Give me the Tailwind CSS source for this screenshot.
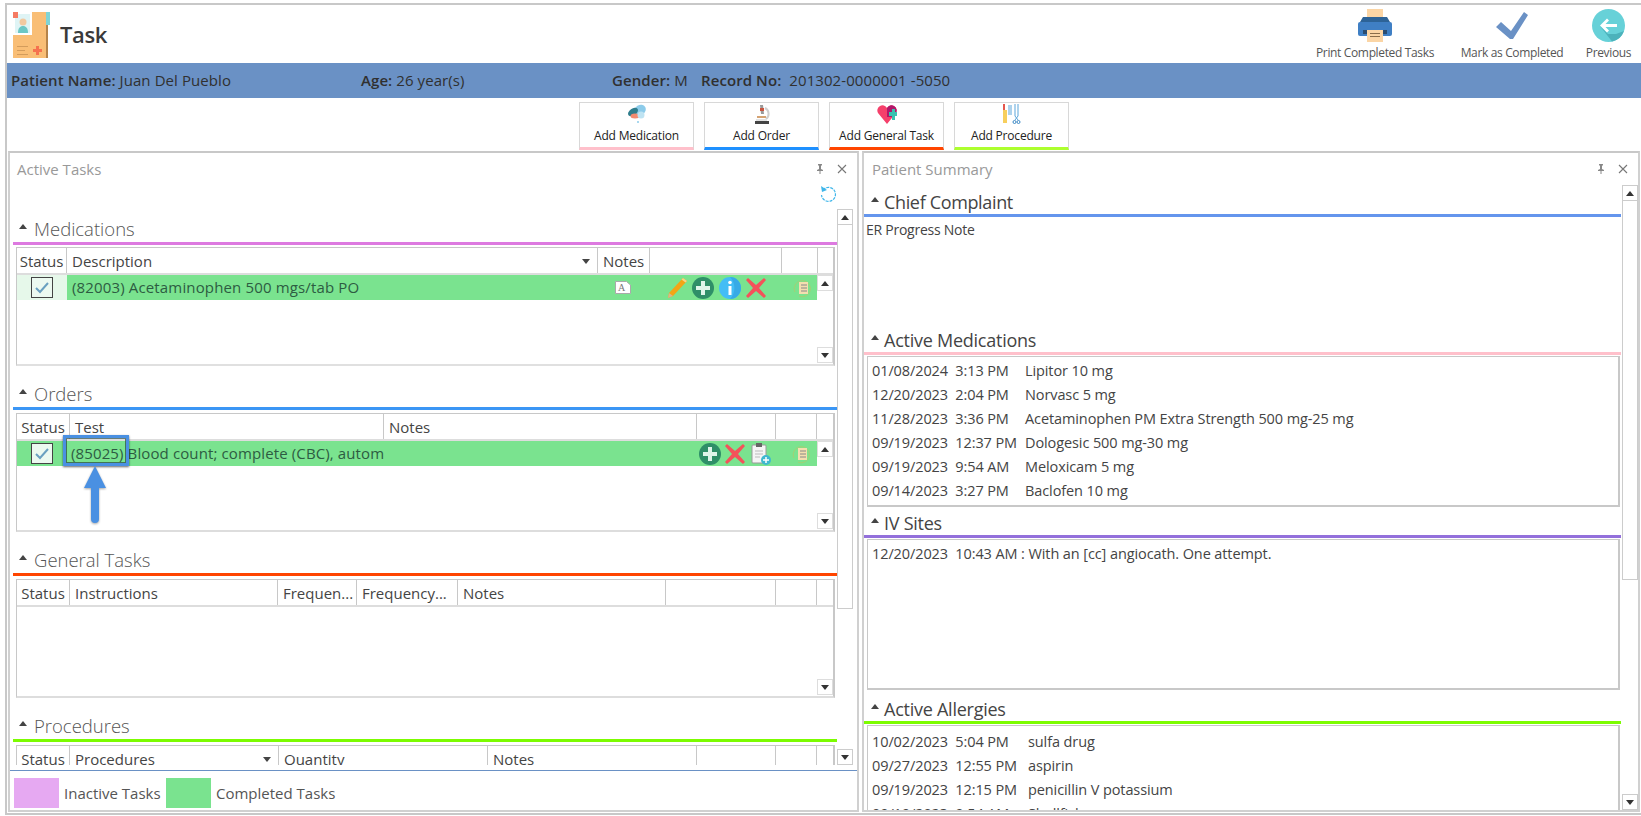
<!DOCTYPE html>
<html lang="en">
<head>
    <meta charset="UTF-8">
    <title>Task</title>
    <script src="https://cdn.jsdelivr.net/npm/@tailwindcss/browser@4"></script>
</head>
<body class="bg-white h-[816px] w-[1641px] overflow-hidden font-['Open_Sans',sans-serif] text-[15px] text-[#444]">
<div class="pt-[3px] pl-[5px] h-[815px] flex flex-col">
<div class="border-t-2 border-l-2 border-b-2 border-[#c8c8c8] flex-1 flex flex-col min-h-0">

    <!-- Header -->
    <header class="h-[58px] flex justify-between">
        <div class="flex items-center pl-[6px]">
            <svg width="37" height="46" viewBox="0 0 37 46" class="mt-[1px]">
                <rect x="0" y="0" width="35" height="46" fill="#f9be76"/>
                <rect x="33" y="0" width="4" height="13" fill="#7fd4d6"/>
                <rect x="33" y="13" width="2" height="33" fill="#b5834a"/>
                <rect x="0" y="0" width="19" height="23" fill="#fff"/>
                <rect x="2" y="2" width="15" height="19" fill="#dff4f5"/>
                <rect x="0" y="0" width="5" height="6" fill="#f57b63"/>
                <circle cx="10" cy="10" r="3.5" fill="#f2c9a0"/>
                <path d="M5 21c0-5 2-7 5-7s5 2 5 7z" fill="#6cc7c5"/>
                <rect x="4" y="34" width="11" height="1" fill="#d39c5c"/>
                <rect x="4" y="38" width="8" height="1" fill="#d39c5c"/>
                <rect x="4" y="42" width="11" height="1" fill="#d39c5c"/>
                <path d="M23 34h3v3h3v3h-3v3h-3v-3h-3v-3h3z" fill="#f5724f"/>
            </svg>
            <h1 class="ml-[10px] text-[22px] font-semibold tracking-[-0.4px] text-[#3a3a3a]">Task</h1>
        </div>
        <div class="flex text-[12px] text-[#555] pr-[10px] pt-[4px] tracking-[-0.35px]">
            <div class="flex flex-col items-center w-[118px]">
                <svg width="34" height="33" viewBox="0 0 34 33">
                    <rect x="9" y="0" width="16" height="12" fill="#fbd5a5"/>
                    <path d="M5 8h24l3 5H2z" fill="#2d6397"/>
                    <rect x="0" y="13" width="34" height="14" rx="2" fill="#3f7fc4"/>
                    <rect x="5" y="21" width="24" height="4" fill="#2b4c70"/>
                    <rect x="9" y="21" width="16" height="12" fill="#fbd5a5"/>
                    <rect x="12" y="24" width="10" height="1" fill="#8a6d4a"/>
                    <rect x="12" y="27" width="10" height="1" fill="#8a6d4a"/>
                </svg>
                <span class="mt-[2px] whitespace-nowrap">Print Completed Tasks</span>
            </div>
            <div class="flex flex-col items-center w-[104px] ml-[26px]">
                <svg width="34" height="33" viewBox="0 0 34 33"><path d="M1 18l5-5 10 9L29 3l4 3-15 24h-3z" fill="#6a91c5"/></svg>
                <span class="mt-[2px] whitespace-nowrap">Mark as Completed</span>
            </div>
            <div class="flex flex-col items-center w-[45px] ml-[22px]">
                <svg width="33" height="33" viewBox="0 0 33 33">
                    <circle cx="16.5" cy="16.5" r="16.5" fill="#67d1d8"/>
                    <path d="M8 17l8 8h8l8-3a16.5 16.5 0 0 1-12 10.500z" fill="#4cb2bb"/>
                    <path d="M8 16.500l7-7 2 2-3.500 3.500H25v3H13.500l3.500 3.500-2 2z" fill="#fff"/>
                </svg>
                <span class="mt-[2px] whitespace-nowrap">Previous</span>
            </div>
        </div>
    </header>

    <!-- Patient bar -->
    <div class="h-[35px] bg-[#6a91c5] flex items-center pl-[4px] text-[#303030] tracking-[0.08px]">
        <div class="w-[350px]"><b class="font-semibold">Patient Name:</b> Juan Del Pueblo</div>
        <div class="w-[251px]"><b class="font-semibold">Age:</b> 26 year(s)</div>
        <div class="w-[89px]"><b class="font-semibold">Gender:</b> M</div>
        <div><b class="font-semibold">Record No:</b>&nbsp; 201302-0000001 -5050</div>
    </div>

    <!-- Add buttons -->
    <div class="h-[53px] flex justify-center gap-[10px] pt-[4px] text-[12px] text-[#222] tracking-[-0.2px]">
        <button class="w-[115px] h-[48px] border border-[#d8d8d8] border-b-[3px] border-b-[#ffc0cb] flex flex-col items-center">
            <svg width="20" height="20" viewBox="0 0 20 20" class="mt-[1px]">
                <ellipse cx="13" cy="6" rx="6" ry="5" fill="#8ccbea" transform="rotate(-30 13 6)"/>
                <ellipse cx="6" cy="8" rx="5.500" ry="3.500" fill="#2f7d8c" transform="rotate(-35 6 8)"/>
                <ellipse cx="8" cy="12" rx="4.500" ry="2.500" fill="#f28a70"/>
                <circle cx="14" cy="11" r="3.500" fill="#bfe3f2"/>
                <circle cx="11" cy="18" r="1" fill="#8ccbea"/>
            </svg>
            <span class="mt-[3px]">Add Medication</span>
        </button>
        <button class="w-[115px] h-[48px] border border-[#d8d8d8] border-b-[3px] border-b-[#1e90ff] flex flex-col items-center">
            <svg width="20" height="20" viewBox="0 0 20 20" class="mt-[1px]" fill="none">
                <path d="M8 1h3l1 9H9z" fill="#9a9a9a"/>
                <rect x="8" y="4" width="4" height="3" fill="#c9553f"/>
                <path d="M13 4a6.500 6.500 0 0 1 1 11" stroke="#cfcfcf" stroke-width="2"/>
                <rect x="5" y="12" width="9" height="2" fill="#d5a373"/>
                <rect x="4" y="15" width="11" height="2" fill="#e3e3e3"/>
                <rect x="3" y="17" width="14" height="3" fill="#444"/>
            </svg>
            <span class="mt-[3px]">Add Order</span>
        </button>
        <button class="w-[115px] h-[48px] border border-[#d8d8d8] border-b-[3px] border-b-[#ff4500] flex flex-col items-center">
            <svg width="20" height="20" viewBox="0 0 20 20" class="mt-[1px]">
                <path d="M10 20L1 9a5 5 0 0 1 9-5 5 5 0 0 1 9 5z" fill="#f5406b"/>
                <path d="M10 4a5 5 0 0 1 9 5l-3 4H10z" fill="#b0176a"/>
                <path d="M12 8h3V5h3v3h2v4h-2v4h-3v-4h-3z" fill="#38c2b0"/>
            </svg>
            <span class="mt-[3px]">Add General Task</span>
        </button>
        <button class="w-[115px] h-[48px] border border-[#d8d8d8] border-b-[3px] border-b-[#adff2f] flex flex-col items-center">
            <svg width="20" height="20" viewBox="0 0 20 20" class="mt-[1px]" fill="none">
                <rect x="1" y="0" width="2" height="6" fill="#e5574d"/>
                <rect x="1" y="6" width="4" height="13" fill="#f7cf5d"/>
                <path d="M7 1v10M9 1v10M13 0v12M16 0v12M13 12l3 4M16 12l-3 4" stroke="#5aa5da"/>
                <circle cx="12.500" cy="18" r="1.500" stroke="#3b88c4"/>
                <circle cx="16.500" cy="18" r="1.500" stroke="#3b88c4"/>
            </svg>
            <span class="mt-[3px]">Add Procedure</span>
        </button>
    </div>

    <div class="flex-1 min-h-0 flex pl-[1px] pr-[1px] pb-[1px] gap-[3px]">

        <!-- Active Tasks panel -->
        <section class="w-[851px] border-2 border-[#d0d0d0] border-t-[#c8c8c8] flex flex-col min-h-0 shrink-0">
            <div class="h-[22px] flex items-center justify-between pl-[7px] pr-[9px] pt-[10px]">
                <span class="text-[#999]">Active Tasks</span>
                <span class="flex items-center gap-[10px]">
                    <svg width="12" height="12" viewBox="0 0 12 12"><path d="M4 1h4v1l-1 1v3l2 1v1H6.500v3h-1V8H3V7l2-1V3L4 2z" fill="#888"/></svg>
                    <svg width="12" height="12" viewBox="0 0 12 12"><path d="M2 2l8 8M10 2l-8 8" stroke="#777" stroke-width="1.100"/></svg>
                </span>
            </div>
            <div class="flex-1 min-h-0 flex overflow-hidden mb-[5px]">
                <div class="w-[827px] shrink-0 pl-[3px]">
                    <div class="h-[32px] flex justify-end pt-[10px]">
                        <svg width="18" height="18" viewBox="0 0 18 18" fill="none"><path d="M4 5a7 7 0 1 1-1.500 5" stroke="#3fb6ea" stroke-width="1.200" stroke-dasharray="3 1"/><path d="M2 1l1 6 5-2z" fill="#3fb6ea"/></svg>
                    </div>

                    <!-- Medications -->
                    <h2 class="h-[35px] flex items-end pb-[1px] text-[18.5px] leading-[24px] font-light text-[#555]"><span class="w-[21px] pl-[6px] mb-[12px]"><svg width="8" height="5" viewBox="0 0 8 5"><path d="M4 0l4 5H0z" fill="#444"/></svg></span>Medications</h2>
                    <div class="h-[3px] bg-[#dd7ae0]"></div>
                    <div class="mt-[2px] ml-[3px] mr-[2px] h-[119px] border border-[#c8c8c8] border-b-2 border-r-2 border-b-[#e0e0e0] flex flex-col">
                        <div class="h-[27px] grid grid-cols-[50px_531px_52px_132px_36px_1fr] border-b-2 border-[#ddd] items-center">
                            <div class="h-full pt-[2px] flex items-center justify-center border-r border-[#c8c8c8]">Status</div>
                            <div class="h-full pt-[2px] flex items-center justify-between pl-[5px] pr-[7px] border-r border-[#c8c8c8]">Description<svg width="8" height="5" viewBox="0 0 8 5"><path d="M0 0h8L4 5z" fill="#444"/></svg></div>
                            <div class="h-full pt-[2px] flex items-center px-[5px] border-r border-[#c8c8c8]">Notes</div>
                            <div class="h-full border-r border-[#c8c8c8]"></div>
                            <div class="h-full border-r border-[#c8c8c8]"></div>
                            <div></div>
                        </div>
                        <div class="flex-1 flex min-h-0">
                            <div class="flex-1">
                                <div class="h-[25px] flex items-center bg-[#7ae38f] text-[#2d5c42] tracking-[0.15px]">
                                    <div class="w-[50px] h-full bg-[#e6f8ea] flex items-center justify-center shrink-0">
                                        <span class="w-[22px] h-[21px] border border-[#444] bg-[#ecf9f0] flex items-center justify-center"><svg width="14" height="12" viewBox="0 0 14 12"><path d="M1 6l4 4 8-9" fill="none" stroke="#6aa0c0" stroke-width="2"/></svg></span>
                                    </div>
                                    <div class="w-[552px] pl-[5px] whitespace-nowrap shrink-0">(82003) Acetaminophen 500 mgs/tab PO</div>
                                    <svg width="16" height="13" viewBox="0 0 16 13" class="ml-[-4px]"><path d="M.5 .500h11l4 3.500v8.500H.5z" fill="#fff" stroke="#aaa"/><text x="3" y="10" font-size="10" font-family="Liberation Serif" fill="#777">A</text></svg>
                                    <svg width="22" height="22" viewBox="0 0 22 22" class="ml-[35px]"><path d="M17 1l4 3L7 19l-5 2 1-5z" fill="#f2a516"/><path d="M2 21l1-5 4 3z" fill="#d7b98c"/><path d="M17 1l4 3-1.500 1.500-4-3z" fill="#f6d48a"/></svg>
                                    <svg width="22" height="22" viewBox="0 0 22 22" class="ml-[4px]"><circle cx="11" cy="11" r="11" fill="#2f8f68"/><path d="M9 4h4v5h5v4h-5v5H9v-5H4V9h5z" fill="#dff5ea"/></svg>
                                    <svg width="22" height="22" viewBox="0 0 22 22" class="ml-[5px]"><circle cx="11" cy="11" r="11" fill="#43bdf5"/><path d="M11 0a11 11 0 0 1 0 22 16 16 0 0 0 0-22z" fill="#37aae6"/><rect x="9.500" y="9" width="3" height="9" fill="#fff"/><circle cx="11" cy="5.500" r="1.800" fill="#fff"/></svg>
                                    <svg width="22" height="22" viewBox="0 0 22 22" class="ml-[4px]"><path d="M3 1l8 7 8-7 2 2-7 8 7 8-2 2-8-7-8 7-2-2 7-8-7-8z" fill="#f4525a"/></svg>
                                    <svg width="20" height="20" viewBox="0 0 20 20" class="ml-[26px]"><path d="M2 14a8 8 0 1 1 4 4" fill="none" stroke="#a7cf72" stroke-width="1"/><rect x="6" y="4" width="9" height="12" fill="#f4deaf"/><path d="M8 7h6M8 10h6M8 13h6" stroke="#888"/></svg>
                                </div>
                            </div>
                            <div class="w-[16px] flex flex-col justify-between pb-[1px]">
                                <button class="w-[16px] h-[16px] border border-[#ddd] bg-white flex items-center justify-center"><svg width="8" height="5" viewBox="0 0 8 5"><path d="M4 0l4 5H0z" fill="#333"/></svg></button>
                                <button class="w-[16px] h-[16px] border border-[#ddd] bg-white flex items-center justify-center"><svg width="8" height="5" viewBox="0 0 8 5"><path d="M0 0h8L4 5z" fill="#333"/></svg></button>
                            </div>
                        </div>
                    </div>

                    <!-- Orders -->
                    <h2 class="h-[41px] flex items-end pb-[1px] text-[18.5px] leading-[24px] font-light text-[#555]"><span class="w-[21px] pl-[6px] mb-[12px]"><svg width="8" height="5" viewBox="0 0 8 5"><path d="M4 0l4 5H0z" fill="#444"/></svg></span>Orders</h2>
                    <div class="h-[3px] bg-[#3b96f5]"></div>
                    <div class="mt-[3px] ml-[3px] mr-[2px] h-[119px] border border-[#c8c8c8] border-b-2 border-r-2 border-b-[#ddd] flex flex-col relative">
                        <div class="h-[27px] grid grid-cols-[53px_314px_313px_79px_41px_1fr] border-b-2 border-[#ddd] items-center">
                            <div class="h-full pt-[2px] flex items-center justify-center border-r border-[#c8c8c8]">Status</div>
                            <div class="h-full pt-[2px] flex items-center px-[5px] border-r border-[#c8c8c8]">Test</div>
                            <div class="h-full pt-[2px] flex items-center px-[5px] border-r border-[#c8c8c8]">Notes</div>
                            <div class="h-full border-r border-[#c8c8c8]"></div>
                            <div class="h-full border-r border-[#c8c8c8]"></div>
                            <div></div>
                        </div>
                        <div class="flex-1 flex min-h-0">
                            <div class="flex-1">
                                <div class="h-[25px] flex items-center bg-[#7ae38f] text-[#2d5c42] pl-[14px] tracking-[0.12px]">
                                    <span class="w-[22px] h-[21px] border border-[#444] bg-[#ecf9f0] flex items-center justify-center shrink-0"><svg width="14" height="12" viewBox="0 0 14 12"><path d="M1 6l4 4 8-9" fill="none" stroke="#6aa0c0" stroke-width="2"/></svg></span>
                                    <div class="w-[644px] pl-[18px] whitespace-nowrap shrink-0">(85025) Blood count; complete (CBC), autom</div>
                                    <svg width="22" height="22" viewBox="0 0 22 22" class="ml-[2px]"><circle cx="11" cy="11" r="11" fill="#2f8f68"/><path d="M9 4h4v5h5v4h-5v5H9v-5H4V9h5z" fill="#dff5ea"/></svg>
                                    <svg width="22" height="22" viewBox="0 0 22 22" class="ml-[3px]"><path d="M3 1l8 7 8-7 2 2-7 8 7 8-2 2-8-7-8 7-2-2 7-8-7-8z" fill="#f4525a"/></svg>
                                    <svg width="20" height="22" viewBox="0 0 20 22" class="ml-[5px]"><rect x="1" y="2" width="14" height="18" rx="1" fill="#f5f5f5" stroke="#999"/><rect x="5" y="0" width="6" height="4" fill="#666"/><path d="M4 8h8M4 11h8M4 14h5" stroke="#bbb"/><circle cx="15" cy="17" r="5" fill="#3fb8cf"/><path d="M15 14v6M12 17h6" stroke="#fff" stroke-width="1.500"/></svg>
                                    <svg width="20" height="20" viewBox="0 0 20 20" class="ml-[21px]"><path d="M2 14a8 8 0 1 1 4 4" fill="none" stroke="#a7cf72" stroke-width="1"/><rect x="6" y="4" width="9" height="12" fill="#f4deaf"/><path d="M8 7h6M8 10h6M8 13h6" stroke="#888"/></svg>
                                </div>
                            </div>
                            <div class="w-[16px] flex flex-col justify-between pb-[1px]">
                                <button class="w-[16px] h-[16px] border border-[#ddd] bg-white flex items-center justify-center"><svg width="8" height="5" viewBox="0 0 8 5"><path d="M4 0l4 5H0z" fill="#333"/></svg></button>
                                <button class="w-[16px] h-[16px] border border-[#ddd] bg-white flex items-center justify-center"><svg width="8" height="5" viewBox="0 0 8 5"><path d="M0 0h8L4 5z" fill="#333"/></svg></button>
                            </div>
                        </div>
                        <!-- callout over the code -->
                        <div class="absolute left-[46px] top-[21px] w-[66px] h-[31px] border-[3px] border-[#4a90e2] shadow-[0_1px_2px_rgba(0,0,0,0.6),inset_0_0_0_1px_rgba(40,70,60,0.7)]"></div>
                        <svg width="30" height="58" viewBox="0 0 30 58" class="absolute left-[63px] top-[52px] drop-shadow-[0_1px_1px_rgba(0,0,0,0.35)]"><path d="M15 0l11 22h-7v31a4 4 0 0 1-8 0V22H4z" fill="#4a90e2"/></svg>
                    </div>

                    <!-- General Tasks -->
                    <h2 class="h-[41px] flex items-end pb-[1px] text-[18.5px] leading-[24px] font-light text-[#555]"><span class="w-[21px] pl-[6px] mb-[12px]"><svg width="8" height="5" viewBox="0 0 8 5"><path d="M4 0l4 5H0z" fill="#444"/></svg></span>General Tasks</h2>
                    <div class="h-[3px] bg-[#ff4500]"></div>
                    <div class="mt-[3px] ml-[3px] mr-[2px] h-[119px] border border-[#c8c8c8] border-b-2 border-r-2 border-b-[#ddd] flex flex-col">
                        <div class="h-[27px] grid grid-cols-[53px_208px_79px_101px_208px_110px_41px_1fr] border-b-2 border-[#ddd] items-center">
                            <div class="h-full pt-[2px] flex items-center justify-center border-r border-[#c8c8c8]">Status</div>
                            <div class="h-full pt-[2px] flex items-center px-[5px] border-r border-[#c8c8c8]">Instructions</div>
                            <div class="h-full pt-[2px] flex items-center px-[5px] border-r border-[#c8c8c8] whitespace-nowrap overflow-hidden">Frequen...</div>
                            <div class="h-full pt-[2px] flex items-center px-[5px] border-r border-[#c8c8c8] whitespace-nowrap overflow-hidden">Frequency...</div>
                            <div class="h-full pt-[2px] flex items-center px-[5px] border-r border-[#c8c8c8]">Notes</div>
                            <div class="h-full border-r border-[#c8c8c8]"></div>
                            <div class="h-full border-r border-[#c8c8c8]"></div>
                            <div></div>
                        </div>
                        <div class="flex-1 flex justify-end items-end pb-[1px] min-h-0">
                            <button class="w-[16px] h-[16px] border border-[#ddd] bg-white flex items-center justify-center"><svg width="8" height="5" viewBox="0 0 8 5"><path d="M0 0h8L4 5z" fill="#333"/></svg></button>
                        </div>
                    </div>

                    <!-- Procedures -->
                    <h2 class="h-[41px] flex items-end pb-[1px] text-[18.5px] leading-[24px] font-light text-[#555]"><span class="w-[21px] pl-[6px] mb-[12px]"><svg width="8" height="5" viewBox="0 0 8 5"><path d="M4 0l4 5H0z" fill="#444"/></svg></span>Procedures</h2>
                    <div class="h-[3px] bg-[#7cfc00]"></div>
                    <div class="mt-[3px] ml-[3px] mr-[2px] h-[119px] border border-[#c8c8c8] border-b-2 border-r-2 flex flex-col">
                        <div class="h-[27px] grid grid-cols-[53px_209px_209px_209px_79px_41px_1fr] border-b-2 border-[#ddd] items-center">
                            <div class="h-full pt-[2px] flex items-center justify-center border-r border-[#c8c8c8]">Status</div>
                            <div class="h-full pt-[2px] flex items-center justify-between pl-[5px] pr-[7px] border-r border-[#c8c8c8]">Procedures<svg width="8" height="5" viewBox="0 0 8 5"><path d="M0 0h8L4 5z" fill="#444"/></svg></div>
                            <div class="h-full pt-[2px] flex items-center px-[5px] border-r border-[#c8c8c8]">Quantity</div>
                            <div class="h-full pt-[2px] flex items-center px-[5px] border-r border-[#c8c8c8]">Notes</div>
                            <div class="h-full border-r border-[#c8c8c8]"></div>
                            <div class="h-full border-r border-[#c8c8c8]"></div>
                            <div></div>
                        </div>
                    </div>
                </div>
                <!-- panel scrollbar -->
                <div class="w-[16px] flex flex-col pt-[34px]">
                    <div class="h-[400px] border border-[#ccc] w-[16px]">
                        <button class="w-[14px] h-[15px] border-b border-[#ccc] flex items-center justify-center"><svg width="8" height="5" viewBox="0 0 8 5"><path d="M4 0l4 5H0z" fill="#333"/></svg></button>
                    </div>
                    <div class="flex-1"></div>
                    <button class="w-[16px] h-[16px] border border-[#ccc] flex items-center justify-center bg-white"><svg width="8" height="5" viewBox="0 0 8 5"><path d="M0 0h8L4 5z" fill="#333"/></svg></button>
                </div>
            </div>
            <!-- Legend -->
            <div class="h-[40px] shrink-0 border-t border-[#6a91c5] flex items-center pt-[5px] pl-[4px] text-[#555]">
                <span class="w-[45px] h-[30px] bg-[#e6a9f2]"></span>
                <span class="ml-[5px] w-[102px]">Inactive Tasks</span>
                <span class="w-[45px] h-[30px] bg-[#7ae38f]"></span>
                <span class="ml-[5px]">Completed Tasks</span>
            </div>
        </section>

        <!-- Patient Summary panel -->
        <section class="flex-1 min-w-0 border-2 border-[#d0d0d0] border-t-[#c8c8c8] flex flex-col min-h-0">
            <div class="h-[22px] flex items-center justify-between pl-[8px] pr-[9px] pt-[10px] shrink-0">
                <span class="text-[#999]">Patient Summary</span>
                <span class="flex items-center gap-[10px]">
                    <svg width="12" height="12" viewBox="0 0 12 12"><path d="M4 1h4v1l-1 1v3l2 1v1H6.500v3h-1V8H3V7l2-1V3L4 2z" fill="#888"/></svg>
                    <svg width="12" height="12" viewBox="0 0 12 12"><path d="M2 2l8 8M10 2l-8 8" stroke="#777" stroke-width="1.100"/></svg>
                </span>
            </div>
            <div class="flex-1 min-h-0 flex overflow-hidden text-[14.5px] tracking-[-0.1px]">
                <div class="flex-1 min-w-0">
                    <h2 class="h-[39px] flex items-end text-[18px] leading-[24px] tracking-[-0.35px] text-[#444]"><span class="w-[20px] pl-[7px] mb-[12px]"><svg width="8" height="5" viewBox="0 0 8 5"><path d="M4 0l4 5H0z" fill="#444"/></svg></span>Chief Complaint</h2>
                    <div class="h-[3px] bg-[#6495ed]"></div>
                    <div class="h-[108px] pl-[2px] pt-[2px] text-[14px] tracking-[-0.25px]">ER Progress Note</div>

                    <h2 class="h-[27px] flex items-end text-[18px] leading-[24px] tracking-[-0.25px] text-[#444]"><span class="w-[20px] pl-[7px] mb-[12px]"><svg width="8" height="5" viewBox="0 0 8 5"><path d="M4 0l4 5H0z" fill="#444"/></svg></span>Active Medications</h2>
                    <div class="h-[3px] bg-[#ffc0cb]"></div>
                    <div class="mt-[1px] ml-[3px] mr-[1px] h-[151px] border border-[#c8c8c8] border-b-2 border-r-2 px-[4px] pt-[2px] leading-[24px]">
                        <div class="flex"><span class="w-[153px]">01/08/2024&nbsp; 3:13 PM</span>Lipitor 10 mg</div>
                        <div class="flex"><span class="w-[153px]">12/20/2023&nbsp; 2:04 PM</span>Norvasc 5 mg</div>
                        <div class="flex"><span class="w-[153px]">11/28/2023&nbsp; 3:36 PM</span>Acetaminophen PM Extra Strength 500 mg-25 mg</div>
                        <div class="flex"><span class="w-[153px]">09/19/2023&nbsp; 12:37 PM</span>Dologesic 500 mg-30 mg</div>
                        <div class="flex"><span class="w-[153px]">09/19/2023&nbsp; 9:54 AM</span>Meloxicam 5 mg</div>
                        <div class="flex"><span class="w-[153px]">09/14/2023&nbsp; 3:27 PM</span>Baclofen 10 mg</div>
                    </div>

                    <h2 class="h-[28px] flex items-end text-[18px] leading-[24px] tracking-[-0.25px] text-[#444]"><span class="w-[20px] pl-[7px] mb-[12px]"><svg width="8" height="5" viewBox="0 0 8 5"><path d="M4 0l4 5H0z" fill="#444"/></svg></span>IV Sites</h2>
                    <div class="h-[3px] bg-[#9370db]"></div>
                    <div class="mt-[1px] ml-[3px] mr-[1px] h-[151px] border border-[#c8c8c8] border-b-2 border-r-2 px-[4px] pt-[2px] leading-[24px]">12/20/2023&nbsp; 10:43 AM : With an [cc] angiocath. One attempt.</div>

                    <h2 class="h-[31px] flex items-end text-[18px] leading-[24px] tracking-[-0.25px] text-[#444]"><span class="w-[20px] pl-[7px] mb-[12px]"><svg width="8" height="5" viewBox="0 0 8 5"><path d="M4 0l4 5H0z" fill="#444"/></svg></span>Active Allergies</h2>
                    <div class="h-[3px] bg-[#7cfc00]"></div>
                    <div class="mt-[1px] ml-[3px] mr-[1px] h-[87px] overflow-hidden border border-[#c8c8c8] border-r-2 border-b-2 px-[4px] pt-[4px] leading-[24px]">
                        <div class="flex"><span class="w-[156px]">10/02/2023&nbsp; 5:04 PM</span>sulfa drug</div>
                        <div class="flex"><span class="w-[156px]">09/27/2023&nbsp; 12:55 PM</span>aspirin</div>
                        <div class="flex"><span class="w-[156px]">09/19/2023&nbsp; 12:15 PM</span>penicillin V potassium</div>
                        <div class="flex"><span class="w-[156px]">09/19/2023&nbsp; 9:54 AM</span>Shellfish</div>
                    </div>
                </div>
                <div class="w-[16px] shrink-0 flex flex-col ml-[1px]">
                    <div class="h-[395px] mt-[10px] border border-[#ccc]">
                        <button class="w-[14px] h-[15px] border-b border-[#ccc] flex items-center justify-center"><svg width="8" height="5" viewBox="0 0 8 5"><path d="M4 0l4 5H0z" fill="#333"/></svg></button>
                    </div>
                    <div class="flex-1"></div>
                    <button class="w-[16px] h-[16px] border border-[#ccc] flex items-center justify-center"><svg width="8" height="5" viewBox="0 0 8 5"><path d="M0 0h8L4 5z" fill="#333"/></svg></button>
                </div>
            </div>
        </section>
    </div>
</div>
</div>
</body>
</html>
